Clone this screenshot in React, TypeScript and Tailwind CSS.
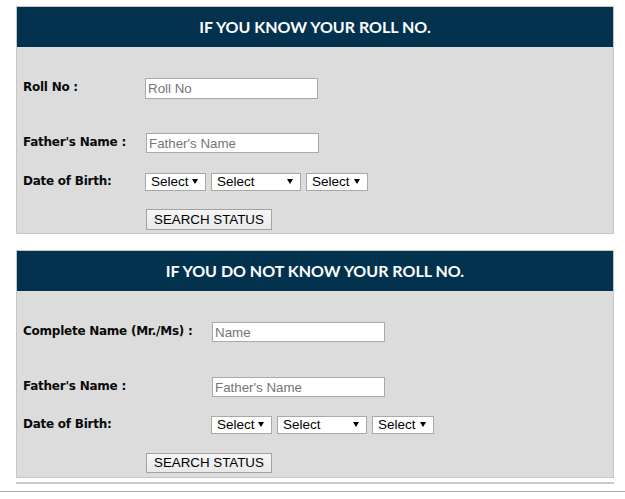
import React from 'react';

// Result status lookup — two search forms stacked, old-school table look.

const arial = "font-['Liberation_Sans',Arial,sans-serif]";

function Arrow() {
  return (
    <svg width="6" height="5" viewBox="0 0 6 5" className="pointer-events-none absolute right-[8px] top-[6px]">
      <polygon points="0,0 6,0 3,5" fill="#000" />
    </svg>
  );
}

function DropDown({ width }: { width: string }) {
  return (
    <div className={`relative h-[18px] ${width}`}>
      <select
        defaultValue=""
        className={`${arial} block h-full w-full appearance-none rounded-none border border-[#a9a9a9] bg-white pl-[5px] text-[13.5px] leading-none text-black outline-none`}
      >
        <option value="">Select</option>
      </select>
      <Arrow />
    </div>
  );
}

function TextBox({ placeholder, h = 'h-[20px]' }: { placeholder: string; h?: string }) {
  return (
    <input
      type="text"
      placeholder={placeholder}
      className={`${arial} ${h} block w-[173px] border border-[#a9a9a9] bg-white px-[2px] text-[13.33px] text-black placeholder:text-[#757575] outline-none`}
    />
  );
}

function Label({ children, width }: { children: React.ReactNode; width: string }) {
  return (
    <div className={`${width} shrink-0 pb-[3px] pl-[6px] font-['DejaVu_Sans',Verdana,sans-serif] text-[12px] font-bold tracking-[-0.25px] text-[#0a0a0a]`}>
      {children}
    </div>
  );
}

function SearchButton() {
  return (
    <button
      type="button"
      className={`${arial} block h-full border border-[#a3a3a3] bg-gradient-to-b from-[#f6f6f6] to-[#e9e9e9] px-[7px] text-[13.33px] leading-none text-black`}
    >
      SEARCH STATUS
    </button>
  );
}

function Header({ title }: { title: string }) {
  return (
    <div className="flex h-[40px] items-center justify-center bg-[#03324f] font-['Lato',sans-serif] text-[16px] font-bold text-white">
      {title}
    </div>
  );
}

function DobRow({ labelW, mt }: { labelW: string; mt: string }) {
  return (
    <div className={`flex h-[18px] items-center ${mt}`}>
      <Label width={labelW}>Date of Birth:</Label>
      <div className="flex gap-[5px]">
        <DropDown width="w-[61px]" />
        <DropDown width="w-[90px]" />
        <DropDown width="w-[62px]" />
      </div>
    </div>
  );
}

export default function App() {
  return (
    <div className="min-h-[499px] bg-white pt-[6px]">
      {/* known roll number */}
      <div className="ml-[16px] w-[598px] border border-[#c6c6c6] bg-[#dcdcdc] pb-[3px]">
        <Header title="IF YOU KNOW YOUR ROLL NO." />
        <div className="mt-[31px] flex h-[21px] items-center">
          <Label width="w-[128px]">Roll No :</Label>
          <TextBox placeholder="Roll No" h="h-[21px]" />
        </div>
        <div className="mt-[34px] flex h-[20px] items-center">
          <Label width="w-[129px]">Father's Name :</Label>
          <TextBox placeholder="Father's Name" />
        </div>
        <DobRow labelW="w-[128px]" mt="mt-[20px]" />
        <div className="ml-[129px] mt-[18px] flex h-[21px]">
          <SearchButton />
        </div>
      </div>

      {/* unknown roll number */}
      <div className="ml-[16px] mt-[16px] w-[598px] border border-[#c6c6c6] bg-[#dcdcdc] pb-[4px]">
        <Header title="IF YOU DO NOT KNOW YOUR ROLL NO." />
        <div className="mt-[31px] flex h-[20px] items-center">
          <Label width="w-[195px]">Complete Name (Mr./Ms) :</Label>
          <TextBox placeholder="Name" />
        </div>
        <div className="mt-[35px] flex h-[20px] items-center">
          <Label width="w-[195px]">Father's Name :</Label>
          <TextBox placeholder="Father's Name" />
        </div>
        <DobRow labelW="w-[194px]" mt="mt-[19px]" />
        <div className="ml-[129px] mt-[19px] flex h-[20px]">
          <SearchButton />
        </div>
      </div>

      <div className="ml-[16px] mt-[4px] h-[2px] w-[598px] bg-[#cccccc]" />
      <div className="mt-[7px] h-px w-full bg-[#aaaaaa]" />
    </div>
  );
}
